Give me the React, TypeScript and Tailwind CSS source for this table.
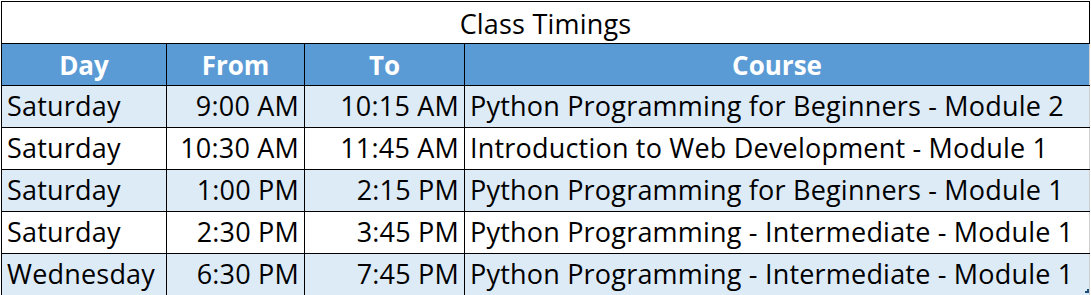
import React from "react";

const rows = [
  { day: "Saturday", from: "9:00 AM", to: "10:15 AM", course: "Python Programming for Beginners - Module 2" },
  { day: "Saturday", from: "10:30 AM", to: "11:45 AM", course: "Introduction to Web Development - Module 1" },
  { day: "Saturday", from: "1:00 PM", to: "2:15 PM", course: "Python Programming for Beginners - Module 1" },
  { day: "Saturday", from: "2:30 PM", to: "3:45 PM", course: "Python Programming - Intermediate - Module 1" },
  { day: "Wednesday", from: "6:30 PM", to: "7:45 PM", course: "Python Programming - Intermediate - Module 1" },
];

export default function App() {
  return (
    <div className="w-[1091px] h-[295px] overflow-hidden bg-white pl-px pt-px relative font-['Open_Sans',sans-serif] text-[27px] tracking-[0.2px] text-black">
      <table className="table-fixed border-collapse w-[1088px]">
        <colgroup>
          <col className="w-[165px]" />
          <col className="w-[138px]" />
          <col className="w-[160px]" />
          <col className="w-[625px]" />
        </colgroup>
        <thead>
          <tr className="h-[42px]">
            <th colSpan={4} className="border border-black font-normal text-center align-bottom pb-[2px] leading-[34px]">
              Class Timings
            </th>
          </tr>
          <tr className="h-[42px] bg-[#5b9bd5] text-white">
            {["Day", "From", "To", "Course"].map((h, i) => (
              <th
                key={h}
                className={`border border-black font-bold text-[26px] tracking-normal text-center align-bottom pb-[3px] leading-[34px] ${i === 3 ? "border-r-[#d0d0d0]" : ""}`}
              >
                {h}
              </th>
            ))}
          </tr>
        </thead>
        <tbody>
          {rows.map((r, i) => (
            <tr key={i} className={`h-[42px] ${i % 2 === 0 ? "bg-[#ddebf7]" : "bg-white"}`}>
              <td className="border border-black px-[5px] align-bottom pb-[4px] leading-[34px] whitespace-nowrap">{r.day}</td>
              <td className="border border-black px-[5px] text-right align-bottom pb-[4px] leading-[34px] whitespace-nowrap">{r.from}</td>
              <td className="border border-black px-[5px] text-right align-bottom pb-[4px] leading-[34px] whitespace-nowrap">{r.to}</td>
              <td className="border border-black border-r-[#d0d0d0] px-[5px] align-bottom pb-[4px] leading-[34px] whitespace-nowrap overflow-hidden">{r.course}</td>
            </tr>
          ))}
        </tbody>
      </table>
      <div className="absolute left-[1085px] top-[289px] w-[4px] h-[4px] border-r-2 border-b-2 border-[#1f4e79]" />
    </div>
  );
}
